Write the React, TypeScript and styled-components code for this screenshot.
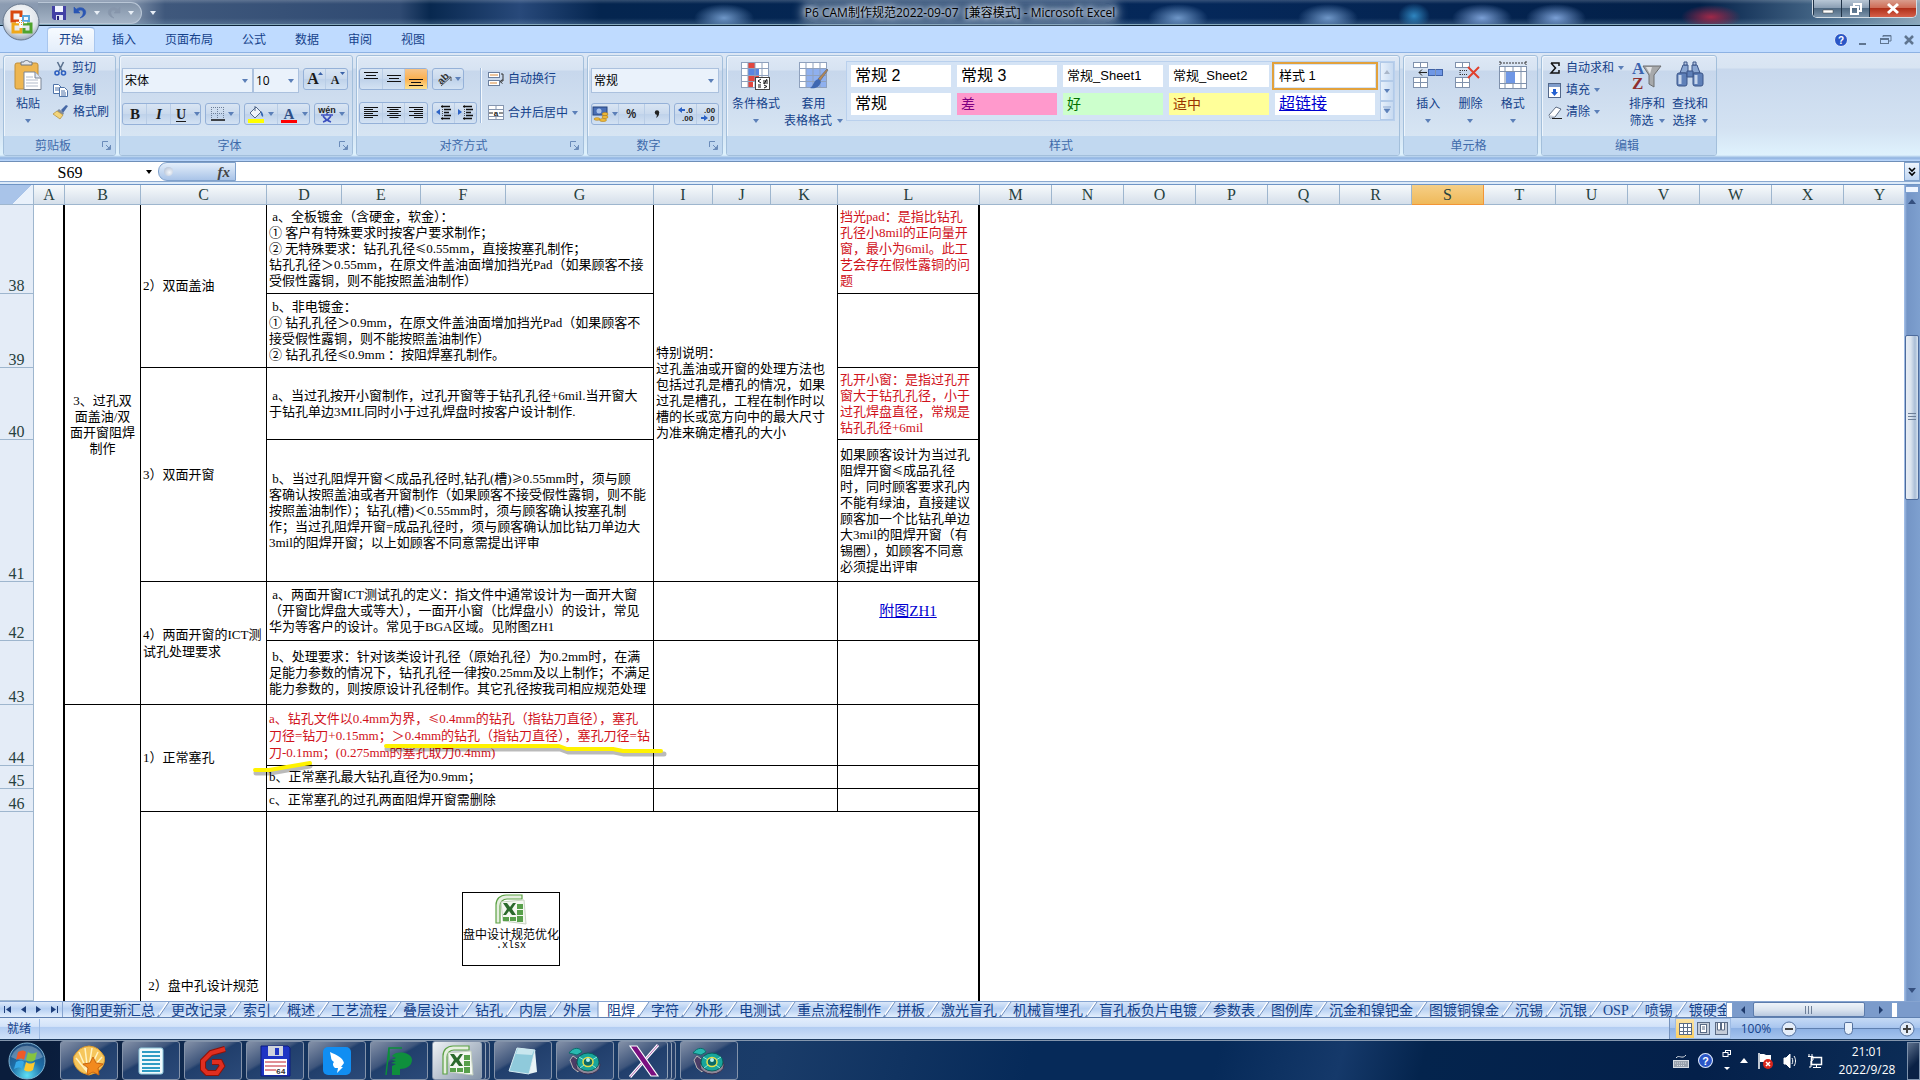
import React from "react";
import styled, { createGlobalStyle, css } from "styled-components";

const UI = `"Open Sans", "Noto Sans CJK SC", sans-serif`;
const SONG = `"Liberation Serif", "Noto Sans CJK SC", serif`;
const CJK = `"Noto Sans CJK SC", sans-serif`;

const Global = createGlobalStyle`
  *, *::before, *::after { box-sizing: border-box; }
  body { margin: 0; background: #fff; overflow: hidden; }
  button, input, select { font: inherit; color: inherit; margin: 0; padding: 0; border: 0; background: none; border-radius: 0; }
  svg { display: block; flex: none; overflow: visible; }
`;

const Window = styled.div`
  height: 100vh;
  display: flex;
  flex-direction: column;
  font: 12px/16px ${UI};
  color: #15428b;
  position: relative;
`;

/* ---------- title bar ---------- */
const TitleBar = styled.header`
  flex: none;
  height: 26px;
  display: grid;
  grid-template-columns: 1fr auto 1fr;
  border-bottom: 1px solid #0c2338;
  box-shadow: inset 0 -1px 0 #86a9bd;
  background:
    radial-gradient(ellipse 30px 14px at 724px 18px, #6f97c8 0, #6f97c800 100%),
    radial-gradient(ellipse 30px 14px at 1178px 18px, #6f97c8 0, #6f97c800 100%),
    radial-gradient(ellipse 30px 14px at 1328px 18px, #6f97c8 0, #6f97c800 100%),
    radial-gradient(ellipse 16px 13px at 1414px 16px, #2f86c0 0, #2f86c000 100%),
    radial-gradient(ellipse 30px 14px at 1482px 18px, #7ba0d6 0, #7ba0d600 100%),
    radial-gradient(ellipse 30px 14px at 1556px 18px, #7ba0d6 0, #7ba0d600 100%),
    radial-gradient(ellipse 30px 12px at 1711px 17px, #a02848 0, #a0284800 100%),
    linear-gradient(180deg, #ffffff30 0, #ffffff00 4px, #ffffff00 18px, #8fb0c850 100%),
    linear-gradient(90deg, #8c9cb2 0, #8293ab 130px, #3f587c 165px, #2f4a72 400px, #08284f 430px, #28497a 520px, #04254f 600px, #05285a 1200px, #032048 1700px, #4a6c8c 1830px, #8aa5b8 100%);
`;
const QuickAccess = styled.div`
  display: flex;
  align-items: center;
  padding-left: 38px;
  gap: 8px;
`;
const QuickPill = styled.div`
  height: 22px;
  width: 104px;
  padding-left: 14px;
  display: flex;
  align-items: center;
  gap: 7px;
  border: 1px solid #b9c6d6;
  border-left: 0;
  border-radius: 0 11px 11px 0;
  background: linear-gradient(#8293a8, #a5b4c6);
`;
const IconButton = styled.button`
  display: flex;
  align-items: center;
  justify-content: center;
`;
const Title = styled.h1`
  margin: 0;
  align-self: center;
  font: 12px/20px ${UI};
  color: #000;
  white-space: pre;
  background: #8fa5be70;
  border-radius: 10px;
  box-shadow: 0 0 8px 6px #8fa5be70;
  height: 20px;
  text-shadow: 0 0 4px #dbe5f0, 0 0 6px #dbe5f0, 0 0 8px #dbe5f0;
`;
const WindowButtons = styled.div`
  justify-self: end;
  display: flex;
  height: 18px;
  margin-right: 3px;
  border: 1px solid #d3dde6;
  border-top: 0;
  border-radius: 0 0 5px 5px;
  overflow: hidden;
`;
const WindowButton = styled(IconButton)<{ $close?: boolean }>`
  width: ${p => (p.$close ? 47 : 28)}px;
  border-left: 1px solid #1f3247;
  background: ${p => (p.$close
    ? "linear-gradient(#d99c8c 0, #cf6d57 45%, #b0301a 50%, #d5604a 100%)"
    : "linear-gradient(#b8c7d6 0, #8b9fb4 45%, #4f6982 50%, #7b93aa 100%)")};
`;
const OfficeButton = styled.button`
  position: absolute;
  left: 2px;
  top: 3px;
  z-index: 2;
`;

/* ---------- ribbon tabs ---------- */
const TabRow = styled.nav`
  flex: none;
  height: 26px;
  display: flex;
  align-items: stretch;
  padding: 1px 4px 0 47px;
  gap: 5px;
  background: #bfdbff;
`;
const RibbonTab = styled.button<{ $active?: boolean }>`
  padding: 0 12px;
  font-size: 12px;
  line-height: 24px;
  border-radius: 4px 4px 0 0;
  border: 1px solid transparent;
  border-width: 1px 0 0;
  ${p => p.$active && css`
    background: linear-gradient(#f7fbff, #e3edfa);
    border-color: #8db2e3;
    box-shadow: inset 1px 0 0 #a8c6ee, inset -1px 0 0 #a8c6ee;
  `}
`;
const DocButtons = styled.div`
  margin-left: auto;
  display: flex;
  align-items: center;
  gap: 8px;
`;

/* ---------- ribbon ---------- */
const Ribbon = styled.div`
  flex: none;
  height: 110px;
  padding: 2px 2px 6px 3px;
  display: flex;
  gap: 3px;
  border-top: 1px solid #8db2e3;
  border-bottom: 1px solid #6f8fb8;
  background: linear-gradient(#dce7f5 0, #d8e4f2 15px, #c8d8ed 16px, #d3e2f2 75px, #dff2fd 102px, #8fb2df 105px, #bfdbff 108px);
`;
const Group = styled.section<{ $w: number }>`
  width: ${p => p.$w}px;
  height: 101px;
  display: flex;
  flex-direction: column;
  border: 1px solid #a3bfdb;
  border-radius: 3px;
  background: linear-gradient(#dee8f5 0, #d7e3f2 14px, #c7d7ec 15px, #d7e5f3 80px);
  box-shadow: inset 1px 1px 0 #eef5fc;
`;
const GroupBody = styled.div<{ $gap?: number; $pad?: string }>`
  flex: 1;
  min-height: 0;
  display: flex;
  gap: ${p => p.$gap ?? 0}px;
  padding: ${p => p.$pad ?? "1px 3px 0"};
`;
const Caption = styled.footer`
  height: 19px;
  display: flex;
  align-items: center;
  padding-right: 4px;
  background: #c1d8f0;
  color: #3e6aaa;
  border-radius: 0 0 2px 2px;
`;
const CaptionText = styled.h2`
  flex: 1;
  margin: 0;
  font-size: 12px;
  font-weight: 400;
  line-height: 19px;
  text-align: center;
`;
const Big = styled.button<{ $w: number }>`
  width: ${p => p.$w}px;
  display: flex;
  flex-direction: column;
  align-items: center;
  line-height: 17px;
  white-space: nowrap;
  padding-top: 3px;
  & > svg:first-child { margin-bottom: 5px; }
`;
const BigLine = styled.span`
  display: flex;
  align-items: center;
  justify-content: center;
  gap: 5px;
  height: 17px;
`;
const Stack = styled.div<{ $gap?: number }>`
  display: flex;
  flex-direction: column;
  gap: ${p => p.$gap ?? 0}px;
`;
const Small = styled.button`
  height: 22px;
  display: flex;
  align-items: center;
  gap: 4px;
  white-space: nowrap;
`;
const Row = styled.div<{ $gap?: number }>`
  display: flex;
  gap: ${p => p.$gap ?? 4}px;
`;
const Cluster = styled.div<{ $w: number }>`
  width: ${p => p.$w}px;
  height: 22px;
  display: flex;
  border: 1px solid #95b1d8;
  border-radius: 3px;
  background: linear-gradient(#d9e5f3, #c9d9ed 50%, #bfd2ea 52%, #d3e2f3);
`;
const Tool = styled.button<{ $on?: boolean }>`
  flex: 1;
  display: flex;
  align-items: center;
  justify-content: center;
  gap: 3px;
  ${p => p.$on && css`background: linear-gradient(#f7c58a, #fbb04f 50%, #fde28f);`}
  & + & { border-left: 1px solid #b9cde6; }
`;
const PercentTool = styled(Tool)`
  font-weight: 600;
  color: #222;
`;
const Combo = styled.label<{ $w: number }>`
  width: ${p => p.$w}px;
  height: 25px;
  display: flex;
  align-items: center;
  padding-right: 4px;
  border: 1px solid #abc1de;
  background: #eaf2fb;
  color: #000;
  select { flex: 1; min-width: 0; appearance: none; padding-left: 2px; outline: 0; height: 22px; line-height: 22px; }
`;
const Rule = styled.i`
  width: 2px;
  height: 55px;
  margin: 0 6px 0 3px;
  border-left: 1px solid #9fb9da;
  border-right: 1px solid #f4f9fe;
`;
const Gallery = styled.div`
  margin-top: 4px;
  height: 60px;
  display: flex;
  gap: 5px;
  padding-left: 4px;
  border: 1px solid #b9d0ed;
  background: #d4e3f5;
`;
const GalleryCells = styled.div`
  padding: 3px 0;
  display: grid;
  grid-template-columns: repeat(5, 100px);
  grid-auto-rows: 22px;
  align-content: start;
  gap: 6px;
`;
const StyleCell = styled.button<{ $bg?: string; $c?: string; $size: number; $on?: boolean; $link?: boolean }>`
  height: 22px;
  padding-left: 4px;
  text-align: left;
  font: ${p => p.$size}px/18px "Liberation Sans", ${CJK};
  white-space: pre;
  background: ${p => p.$bg ?? "#fff"};
  color: ${p => p.$c ?? "#000"};
  text-decoration: ${p => (p.$link ? "underline" : "none")};
  ${p => p.$on && css`outline: 2px solid #e2a13c; outline-offset: 1px;`}
`;
const GalleryScroll = styled.div`
  display: flex;
  flex-direction: column;
  width: 14px;
`;
const ScrollStep = styled(IconButton)`
  flex: 1;
  border: 1px solid #b2cae8;
  background: linear-gradient(90deg, #e8f1fb, #c7daf1);
`;

/* ---------- formula bar ---------- */
const FormulaBar = styled.div`
  flex: none;
  height: 23px;
  display: flex;
  border-bottom: 1px solid #6f95c5;
  background: #fff;
  box-shadow: inset 0 -2px 0 #dceaf9, inset 0 -3px 0 #8aa9d0;
  padding-bottom: 3px;
`;
const NameBox = styled.label`
  width: 158px;
  display: flex;
  align-items: center;
  gap: 5px;
  padding-right: 4px;
  color: #000;
  input { width: 140px; height: 19px; padding-top: 2px; text-align: center; font: 16px/17px ${SONG}; outline: 0; }
`;
const FxPill = styled.div`
  width: 78px;
  display: flex;
  align-items: center;
  justify-content: space-between;
  padding: 0 5px;
  border: 1px solid #7fa1cc;
  border-radius: 9px 0 0 9px;
  background: linear-gradient(#e4eefa, #a9c4e8);
`;
const Knob = styled.i`
  width: 9px;
  height: 9px;
  border-radius: 50%;
  background: radial-gradient(circle at 60% 60%, #f4f7fb, #a9b8cf);
`;
const FxButton = styled.button`
  font: italic bold 15px/16px "Liberation Serif", serif;
  color: #444;
`;
const FormulaInput = styled.input`
  flex: 1;
  outline: 0;
`;
const ExpandButton = styled(IconButton)`
  width: 16px;
  border: 1px solid #7fa1cc;
  background: linear-gradient(#eef5fd, #c0d6f2);
`;

/* ---------- sheet ---------- */
const Work = styled.main`
  flex: 1;
  min-height: 0;
  display: flex;
`;
const SheetArea = styled.div`
  flex: 1;
  min-width: 0;
  overflow: hidden;
  position: relative;
  background: #fff;
`;
/* the last column runs on under the scroll bar */
const Sheet = styled.table`
  width: calc(100% + 12px);
  height: 100%;
  table-layout: fixed;
  border-collapse: separate;
  border-spacing: 0;
  color: #000;
  font: 13px/16px ${SONG};
`;
const ColHead = styled.th<{ $on?: boolean; $corner?: boolean }>`
  height: 20px;
  padding: 1px 0 0;
  font: 16px/18px ${SONG};
  color: #27413e;
  border-right: 1px solid #9eb6ce;
  border-bottom: 1px solid #9eb6ce;
  background: linear-gradient(#f7fafc, #d5dfea);
  ${p => p.$on && css`background: linear-gradient(#f6cf86, #efb95a); border-color: #f29536;`}
  ${p => p.$corner && css`background: linear-gradient(135deg, #a9c4e9 60%, #e9f1fb 61%);`}
`;
const RowHead = styled.th`
  padding: 0;
  vertical-align: bottom;
  font: 16px/14px ${SONG};
  color: #27413e;
  background: #e4ecf7;
  border-right: 1px solid #9eb6ce;
  border-bottom: 1px solid #9eb6ce;
`;
const BodyRow = styled.tr<{ $h?: number }>`
  ${p => p.$h && css`height: ${p.$h}px;`}
`;
const Cell = styled.td<{ $thick?: boolean; $red?: boolean; $loose?: boolean; $center?: boolean; $bare?: boolean }>`
  padding: 0 0 0 2px;
  white-space: pre;
  vertical-align: middle;
  border-right: ${p => (p.$thick ? 2 : 1)}px solid #000;
  border-bottom: 1px solid #000;
  color: ${p => (p.$red ? "#d0121b" : "#000")};
  line-height: ${p => (p.$loose ? 17 : 16)}px;
  ${p => p.$center && css`text-align: center; padding: 0;`}
  ${p => p.$bare && css`border-bottom: 0;`}
`;
const UpperCell = styled(Cell)`
  padding-bottom: 60px;
`;
const LowCell = styled(Cell)`
  vertical-align: bottom;
  padding-bottom: 7px;
`;
const Blank = styled.td<{ $edge?: boolean }>`
  padding: 0;
  ${p => p.$edge && css`border-right: 2px solid #000;`}
`;
const SheetLink = styled.a`
  font-size: 15px;
  line-height: 18px;
  color: #0000d0;
`;
const WideSign = styled.span`
  font-family: ${CJK};
  font-size: 11px;
  line-height: 1;
`;
const Marks = styled.svg`
  position: absolute;
  left: 250px;
  top: 550px;
  pointer-events: none;
`;
const FileObject = styled.figure`
  position: absolute;
  left: 462px;
  top: 707px;
  width: 98px;
  height: 74px;
  margin: 0;
  padding-top: 1px;
  border: 1px solid #000;
  background: #fff;
  color: #000;
  display: flex;
  flex-direction: column;
  align-items: center;
  figcaption { font: 12px/12px ${CJK}; text-align: center; white-space: pre; padding-top: 2px; }
  small { display: block; font: 10px/12px "Liberation Mono", monospace; }
`;
const VScroll = styled.div`
  width: 16px;
  display: flex;
  flex-direction: column;
  align-items: center;
  padding: 1px 0 4px;
  background: linear-gradient(90deg, #a8c3ea 0, #7495c6 3px, #7ea0cf 100%);
`;
const SplitTab = styled.i`
  width: 14px;
  height: 7px;
  border: 1px solid #7d9fce;
  background: linear-gradient(#eef5ff 30%, #6c8fc4 31%, #6c8fc4 45%, #eef5ff 46%);
`;
const Track = styled.div<{ $flex: number }>`
  flex: ${p => p.$flex};
`;
const VThumb = styled.button`
  flex: 163;
  width: 14px;
  display: flex;
  align-items: center;
  justify-content: center;
  border: 1px solid #4d6b9c;
  border-radius: 2px;
  background: linear-gradient(90deg, #e8edf4, #dbe4ef 40%, #a9bdd6 75%, #d7e3f0);
`;

/* ---------- sheet tabs + status ---------- */
const TabStrip = styled.div`
  flex: none;
  height: 17px;
  display: flex;
  border-top: 1px solid #86a4d0;
  border-bottom: 1px solid #5f80b0;
  background: linear-gradient(#dbe8fa, #b5cff2 45%, #e2eefd);
  overflow: hidden;
`;
const NavButtons = styled.div`
  width: 63px;
  display: flex;
  align-items: center;
  justify-content: space-around;
  border-right: 1px solid #86a4d0;
`;
const Tabs = styled.div`
  flex: 1;
  min-width: 0;
  display: flex;
  overflow: hidden;
  padding-left: 8px;
`;
const SheetTab = styled.button<{ $on?: boolean }>`
  flex: none;
  height: 16px;
  padding-top: 1px;
  font: 14px/15px ${SONG};
  white-space: nowrap;
  background: ${p => (p.$on ? "#fff" : "none")};
`;
const HScroll = styled.div`
  width: 194px;
  display: flex;
  align-items: center;
  gap: 6px;
  padding: 0 22px 0 0;
  background: #7b9bcb;
`;
const HThumb = styled.button`
  width: 118px;
  height: 15px;
  display: flex;
  align-items: center;
  justify-content: center;
  border: 1px solid #5c7cac;
  border-radius: 2px;
  background: linear-gradient(#eef3f9, #dbe4ef 50%, #b9c9df);
`;
const Grip = styled.i`
  width: 7px;
  height: 16px;
  border: 1px solid #7d9fce;
  background: #fff;
`;
const StatusBar = styled.footer`
  flex: none;
  height: 22px;
  display: flex;
  align-items: center;
  background: linear-gradient(#e3eefc 0, #d3e3f9 40%, #b3cdf2 45%, #cfe1f8 100%);
  border-bottom: 1px solid #1c3a5e;
`;
const Ready = styled.span`
  width: 40px;
  padding-left: 7px;
  border-right: 1px solid #9dbbe4;
  line-height: 20px;
`;
const ZoomPanel = styled.div`
  margin-left: auto;
  width: 251px;
  height: 21px;
  display: flex;
  align-items: center;
  padding: 0 5px 0 5px;
  border-left: 1px solid #7593be;
  background: linear-gradient(#c5daf5 0, #a9c6ef 45%, #8db1e4 50%, #a5c4ee);
`;
const Views = styled.div`
  display: flex;
  width: 56px;
  height: 21px;
  border: 1px solid #9dbbe4;
`;
const ViewButton = styled(IconButton)<{ $on?: boolean }>`
  flex: 1;
  background: ${p => (p.$on ? "linear-gradient(#fbe3a5, #fcd061)" : "#c9dcf4")};
`;
const Percent = styled.output`
  width: 50px;
  text-align: center;
`;
const ZoomRange = styled.input`
  flex: 1;
  min-width: 0;
  appearance: none;
  height: 16px;
  background: linear-gradient(#5f80b0, #5f80b0) center / 100% 1px no-repeat;
  &::-webkit-slider-thumb {
    appearance: none;
    width: 9px;
    height: 13px;
    border: 1px solid #53719f;
    border-radius: 2px 2px 5px 5px;
    background: #e9f1fb;
  }
`;

/* ---------- taskbar ---------- */
const Taskbar = styled.footer`
  flex: none;
  height: 40px;
  display: flex;
  align-items: stretch;
  color: #fff;
  border-top: 1px solid #8496ad;
  background: linear-gradient(105deg, #0a1d3c 0, #0a1d3c 50px, #14345f 300px, #1a3c69 750px, #062a59 1000px, #062a59 1180px, #15396a 1300px, #04244d 1380px, #04204a 1650px, #0c2d57 100%);
`;
const Start = styled.button`
  width: 60px;
  padding: 1px 0 0 8px;
`;
const TaskList = styled.div`
  display: flex;
  gap: 4px;
`;
const Task = styled.button<{ $on?: boolean; $multi?: boolean }>`
  width: 58px;
  display: flex;
  align-items: center;
  justify-content: center;
  border: 1px solid #8493aa;
  border-radius: 3px;
  background: ${p => (p.$on
    ? "linear-gradient(135deg, #eef1f4, #a7b3c2 60%, #7c8da3)"
    : "linear-gradient(150deg, #8491a8 0, #3f567c 40%, #213f6c 45%, #2b4a79 100%)")};
  ${p => p.$multi && css`
    padding-right: 7px;
    box-shadow: inset -3px 0 0 #24406b, inset -4px 0 0 #93a2b6, inset -7px 0 0 #24406b, inset -8px 0 0 #93a2b6;
  `}
`;
const Tray = styled.div`
  margin-left: auto;
  display: flex;
  align-items: center;
  gap: 9px;
`;
const Clock = styled.time`
  width: 60px;
  margin: 0 1px 0 5px;
  display: flex;
  flex-direction: column;
  text-align: center;
  line-height: 18px;
`;
const ShowDesktop = styled.button`
  width: 13px;
  height: 38px;
  border: 1px solid #7f93ad;
  background: linear-gradient(135deg, #5d708c, #0a2145 60%);
`;

/* ---------- drawings ---------- */
const Caret = ({ c = "#5b7fb8", s = 6 }: { c?: string; s?: number }) => (
  <svg width={s} height={4} viewBox="0 0 6 4"><path d="M0 0h6L3 4z" fill={c} /></svg>
);
const Launcher = ({ label }: { label: string }) => (
  <IconButton aria-label={label}>
    <svg width="9" height="9" viewBox="0 0 9 9" fill="none" stroke="#6b8cba"><path d="M.5 6V.5H6M4 4l3 3M8.500 4v4.500H4" /><path d="M5 8l3-3v3z" fill="#6b8cba" stroke="none" /></svg>
  </IconButton>
);
const OfficeOrb = () => (
  <svg width="38" height="38" viewBox="0 0 38 38">
    <defs>
      <radialGradient id="orb" cx=".5" cy=".35" r=".65"><stop offset="0" stopColor="#fff" /><stop offset=".7" stopColor="#dfe4ea" /><stop offset="1" stopColor="#9aa7b8" /></radialGradient>
    </defs>
    <circle cx="19" cy="19" r="18" fill="url(#orb)" stroke="#68788e" />
    <g fill="none" strokeWidth="3">
      <path d="M17 18h-7V9h9v5" stroke="#d9480f" />
      <path d="M21 18v-5h6v5z" stroke="#5aa5de" strokeWidth="2" />
      <path d="M17 21h-6v8h8v-4" stroke="#f0a818" />
      <path d="M21 21h8v8h-7v-4" stroke="#4fa32d" />
    </g>
    <path d="M19 14v11M14 19.500h11" stroke="#fff" strokeWidth="1.500" />
    <path d="M17 19.500h5M19.500 17v5" stroke="#e58a2c" strokeDasharray="1 1" />
  </svg>
);
const Save = () => (
  <svg width="14" height="14" viewBox="0 0 14 14"><path d="M0 0h14v14H2l-2-2z" fill="#4240a5" /><path d="M3 0h8v6H3z" fill="#f1f4ff" /><path d="M4 9h7v5H4z" fill="#dfe3f5" /><path d="M5 10h2v4H5z" fill="#26247c" /></svg>
);
const Undo = ({ c, flip }: { c: string; flip?: boolean }) => (
  <svg width="14" height="14" viewBox="0 0 14 14"><g transform={flip ? "translate(14 0) scale(-1 1)" : undefined}><path d="M1 1v6h6L5 5c3-2 6-.5 5 3-.4 1.600-1.500 2.800-3 4 4-1 6.500-4 5.500-7C11.500 1.500 6.500.500 3.200 3.200z" fill={c} stroke={c} strokeWidth=".6" /></g></svg>
);
const Paste = () => (
  <svg width="28" height="30" viewBox="0 0 28 30">
    <rect x="1" y="3" width="23" height="26" rx="2" fill="#eeb651" stroke="#c08e38" />
    <path d="M7 5V2h3c0-2 5-2 5 0h3v3z" fill="#e2e5ea" stroke="#6c7480" />
    <path d="M10 12h11l6 6v11.500H10z" fill="#fff" stroke="#7a8596" /><path d="M21 12v6h6" fill="#dfe6f0" stroke="#7a8596" />
    <path d="M12 17h7M12 20h12M12 23h12M12 26h12" stroke="#b3bccb" />
  </svg>
);
const Cut = () => (
  <svg width="15" height="15" viewBox="0 0 15 15" fill="none"><path d="M4.500 1l4.500 9M10.500 1L6 10" stroke="#5c728f" strokeWidth="1.600" /><circle cx="4" cy="12" r="2" stroke="#2d5fc0" strokeWidth="1.600" /><circle cx="10.500" cy="12" r="2" stroke="#2d5fc0" strokeWidth="1.600" /></svg>
);
const Copy = () => (
  <svg width="15" height="15" viewBox="0 0 15 15" stroke="#4f73a8" fill="#fff"><path d="M.5 1.500h5l3 3v6h-8z" /><path d="M6.500 4.500h5l3 3v6h-8z" /><path d="M2 5h4M2 7h4M8 8h4M8 10h5M8 12h5" /></svg>
);
const Brush = () => (
  <svg width="16" height="15" viewBox="0 0 16 15"><path d="M15 1l-2-1-5 5 2 3z" fill="#4668a6" /><path d="M6 4l5 4-1 2-6-4z" fill="#7d8aa0" /><path d="M4 6l6 4-3 4-7-5z" fill="#f2d47a" stroke="#b18b33" strokeWidth=".7" /></svg>
);
const Letter = ({ ch, size, style, line, arrow }: { ch: string; size: number; style?: "i" | "b"; line?: string; arrow?: "up" | "down" }) => (
  <svg width="20" height="18" viewBox="0 0 20 18">
    <text x={arrow ? 8 : 10} y="14" textAnchor="middle" fontFamily="Liberation Serif, serif" fontSize={size} fontWeight="bold" fontStyle={style === "i" ? "italic" : "normal"} fill={line && line !== "u" ? "#2f4f86" : "#1b1b1b"}>{ch}</text>
    {line === "u" && <path d="M5 16.500h10" stroke="#1b1b1b" />}
    {line && line !== "u" && <path d="M2 15h16v3H2z" fill={line} />}
    {arrow === "up" && <path d="M13 5h5l-2.500-3z" fill="#3a62a8" />}
    {arrow === "down" && <path d="M13 2h5l-2.500 3z" fill="#3a62a8" />}
  </svg>
);
const Borders = () => (
  <svg width="14" height="14" viewBox="0 0 14 14" fill="none"><path d="M.5 0v12M6.500 0v12M12.500 0v12M0 .5h13M0 6.500h13" stroke="#6d7f98" strokeDasharray="1 1" /><path d="M0 13h14" stroke="#111" strokeWidth="1.500" /></svg>
);
const Bucket = () => (
  <svg width="18" height="18" viewBox="0 0 18 18"><path d="M3 8l6-6 5 5-6 6z" fill="#eef3fa" stroke="#53688a" /><path d="M8 6V1" stroke="#53688a" /><path d="M14 6c2 2 2.500 4 2 6-2-1-2.500-3-2-6z" fill="#3567b5" /><path d="M1 14h16v4H1z" fill="#ffff00" /></svg>
);
const Phonetic = () => (
  <svg width="18" height="18" viewBox="0 0 18 18"><text x="9" y="8" textAnchor="middle" fontFamily="Liberation Sans, sans-serif" fontSize="9" fontWeight="bold" fill="#222">wén</text><path d="M3 10h12M9 8v2M5 11c2 3 5 5 8 6M13 11c-2 3-5 5-8 6" stroke="#3c50c0" strokeWidth="1.500" fill="none" /></svg>
);
const Lines = ({ y, ws, align = "c" }: { y: number; ws: number[]; align?: "l" | "c" | "r" }) => (
  <svg width="16" height="16" viewBox="0 0 16 16" stroke="#111">
    {ws.map((w, i) => {
      const x = align === "l" ? 1 : align === "r" ? 15 - w : (16 - w) / 2;
      return <path key={i} d={`M${x} ${y + i * (ws.length > 3 ? 2 : 3) + 0.5}h${w}`} />;
    })}
  </svg>
);
const Orient = () => (
  <svg width="16" height="16" viewBox="0 0 16 16"><text x="2" y="12" transform="rotate(-45 6 9)" fontFamily="Liberation Sans, sans-serif" fontSize="10" fontWeight="bold" fill="#333">ab</text><path d="M5 15L15 6M15 6v4M15 6h-3" stroke="#555" fill="none" /></svg>
);
const Indent = ({ out }: { out?: boolean }) => (
  <svg width="17" height="16" viewBox="0 0 17 16"><path d="M6 1.500h9M9 4.500h7M9 7.500h5M9 10.500h7M6 13.500h9" stroke="#111" strokeWidth="1.500" /><path d={out ? "M5 4v6L1 7z" : "M1 4v6l4-3z"} fill="#2c62c5" /><path d="M7.500 0v16" stroke="#555" strokeDasharray="1 1" /></svg>
);
const Wrap = () => (
  <svg width="16" height="16" viewBox="0 0 16 16" fill="none"><rect x=".5" y="1.500" width="11" height="5" fill="#fff" stroke="#6b7f9e" /><rect x=".5" y="9.500" width="11" height="5" fill="#fff" stroke="#6b7f9e" /><path d="M2 4h8" stroke="#d98a3a" /><path d="M2 12h7" stroke="#d98a3a" /><path d="M13 3h2v7h-2M14.500 8.500L12 10.500l2.500 2" stroke="#333" /></svg>
);
const Merge = () => (
  <svg width="16" height="16" viewBox="0 0 16 16" fill="none"><rect x=".5" y=".5" width="15" height="14" fill="#fff" stroke="#8797b0" /><path d="M0 4.500h16M0 11.500h16M8 0v4M8 12v3" stroke="#8797b0" /><path d="M1 8h4M15 8h-4" stroke="#222" /><text x="8" y="11" textAnchor="middle" fontFamily="Liberation Sans, sans-serif" fontSize="8" fontWeight="bold" fill="#222">a</text></svg>
);
const Money = () => (
  <svg width="17" height="16" viewBox="0 0 17 16"><rect x="1" y="1" width="14" height="8" fill="#4a6fb5" stroke="#27457f" /><circle cx="7" cy="5" r="2.500" fill="#a9c2ea" /><g fill="#eebb3c" stroke="#b17d16" strokeWidth=".6"><ellipse cx="13" cy="8" rx="3" ry="1.500" /><ellipse cx="13" cy="11" rx="3" ry="1.500" /><ellipse cx="11" cy="14" rx="3.500" ry="1.500" /><ellipse cx="5" cy="13" rx="3" ry="1.300" /></g></svg>
);
const Decimals = ({ up }: { up?: boolean }) => (
  <svg width="18" height="16" viewBox="0 0 18 16" fontFamily="Liberation Sans, sans-serif" fontSize="8" fontWeight="bold" fill="#222">
    <text x={up ? 9 : 5} y="7">{up ? ".0" : ".00"}</text><text x={up ? 5 : 9} y="15">{up ? ".00" : ".0"}</text>
    <path d={up ? "M1 4l4-3v2h3v2H5v2z" : "M9 12L5 9v2H2v2h3v2z"} fill="#2c62c5" />
  </svg>
);
const GridIcon = ({ kind }: { kind: "cond" | "table" }) => (
  <svg width="30" height="30" viewBox="0 -2 30 30">
    <rect x=".5" y=".5" width="27" height="25" fill="#fff" stroke="#8fa1bd" />
    {kind === "cond" ? <g><path d="M7 1h7v5H7zM7 14h11v5H7z" fill="#e2473f" /><path d="M7 7h11v6H7z" fill="#5a86e0" /><path d="M7 19h5v6H7z" fill="#e2473f" /></g> : <path d="M7 6h20v19H7z" fill="#8fb0ef" />}
    <path d="M7 0v26M14 0v26M21 0v26M0 6.500h28M0 13.500h28M0 19.500h28" stroke="#8fa1bd" />
    {kind === "cond"
      ? <g><rect x="14.500" y="15.500" width="14" height="12" fill="#fff" stroke="#444" /><path d="M20 17l-3 2 3 2M17 23h3M17 25h3M22 19h5M22 21h5M26 17l-3 5M23 23l3 1.500-3 1.500" stroke="#111" fill="none" /></g>
      : <g><path d="M29 8l-8 11-2-2L28 7z" fill="#b8874f" stroke="#6b6f7a" strokeWidth=".8" /><path d="M20 17l2 3c-2 6-7 7-11 6 4-2 3-8 9-9z" fill="#3f67b1" /></g>}
  </svg>
);
const CellsIcon = ({ kind }: { kind: "ins" | "del" | "fmt" }) => (
  <svg width="30" height="30" viewBox="0 -1 30 30" fill="#fff" stroke="#7f91ac">
    {kind === "fmt" ? <g><path d="M2 2h26M2 0v4M28 0v4" stroke="#333" strokeDasharray="2 1" /><rect x="1.500" y="5.500" width="27" height="22" /><path d="M7 5v22M23 5v22M1 10.500h27M1 22.500h27M15 5v5M15 23v5" /><rect x="8" y="11" width="9" height="11" fill="#6f97e5" stroke="none" /></g>
      : <g><rect x=".5" y="1.500" width="14" height="5" /><path d="M7.500 1v6" /><rect x=".5" y="16.500" width="14" height="10" /><path d="M7.500 16v11M0 21.500h15" />
        {kind === "ins" ? <g><rect x="15.500" y="8.500" width="14" height="6" fill="#6f97e5" stroke="#3f62a8" /><path d="M22.500 8v7" /><path d="M6 11.500h8M9 8.500l-3 3 3 3" stroke="#222" fill="none" /></g>
          : <g><path d="M5 9.500h8M5 13.500h8M5 9v5" stroke="#333" strokeDasharray="1 1" /><path d="M13 6l11 11M24 6L13 17" stroke="#e0402c" strokeWidth="2" /></g>}</g>}
  </svg>
);
const Sigma = () => <svg width="14" height="14" viewBox="0 0 14 14"><path d="M3 2h8v3M3 2l4.500 5L3 12h8V9" stroke="#111" strokeWidth="1.500" fill="none" /></svg>;
const Fill = () => <svg width="14" height="15" viewBox="0 0 14 15"><rect x=".5" y=".5" width="12" height="14" fill="#fff" stroke="#53688a" /><path d="M1 1h11v3H1z" fill="#7f9dcc" /><path d="M5 6h3v3h2l-3.500 4L3 9h2z" fill="#2460d0" /></svg>;
const Eraser = () => <svg width="14" height="13" viewBox="0 0 14 13"><path d="M1 9l7-8 5 2-6 8-5 1z" fill="#fff" stroke="#5e6e85" /><path d="M1 9l5 1 1 1-5 1z" fill="#c8d0dc" /><path d="M4 12.500h10" stroke="#222" /></svg>;
const SortIcon = () => (
  <svg width="30" height="30" viewBox="0 0 30 30" fontFamily="Liberation Serif, serif" fontWeight="bold" fontSize="17"><path d="M11 6h18l-7 9v12l-5-3v-9z" fill="#a7a9ab" stroke="#6c6e70" /><path d="M14 7h6l-2 7z" fill="#e0e1e2" /><text x="0" y="14" fill="#3b63ae">A</text><text x="0" y="29" fill="#8e2f2f">Z</text></svg>
);
const Binoculars = () => (
  <svg width="28" height="30" viewBox="0 0 28 30" fill="#5f80b8" stroke="#3a5488"><path d="M7 5h5v8H4zM16 5h5l3 8h-8z" fill="#8ba7d2" /><path d="M8 2h3v3H8zM17 2h3v3h-3z" fill="#b7c8e2" /><rect x="1" y="13" width="10" height="13" rx="2" /><rect x="17" y="13" width="10" height="13" rx="2" /><path d="M11 11h6v6h-6z" /><path d="M4 15v9M20 15v9" stroke="#c7d6ec" strokeWidth="3" /></svg>
);
const ExcelIcon = () => (
  <svg width="32" height="32" viewBox="0 0 32 32">
    <path d="M1 29V11C1 5 5 1 11 1h16v4H12c-4 0-7 3-7 7v17z" fill="#e5efdf" stroke="#5da245" strokeWidth="1.200" /><path d="M6 8l23-2 2 24-23-3z" fill="#f4f8f1" stroke="#c6d3c0" />
    <g fill="#57a04a"><path d="M22 10h6v5h-6zM22 16h6v5h-6zM22 22h6v6h-6zM8 23h6v4H8zM15 23h6v4h-6z" /></g>
    <path d="M8 9h4l3 4 3-4h3l-4 6 4 6h-4l-3-4-3 4H8l4-6z" fill="#2b6a2c" />
  </svg>
);
const StartOrb = () => (
  <svg width="38" height="38" viewBox="0 0 38 38">
    <defs><radialGradient id="win" cx=".5" cy=".9" r=".9"><stop offset="0" stopColor="#5ee0f5" /><stop offset=".5" stopColor="#1d6ea8" /><stop offset="1" stopColor="#234a78" /></radialGradient></defs>
    <circle cx="19" cy="19" r="18" fill="url(#win)" stroke="#7fb4d4" /><path d="M3 15a17 17 0 0 1 32 0c-9 5-22 5-32 0z" fill="#ffffff45" />
    <path d="M10 10c3-2 6-2 8 0l-2 8c-2-2-5-2-8 0z" fill="#ee5a28" /><path d="M20 10c3 2 5 2 9 0l-2 8c-3 2-6 2-9 0z" fill="#86c440" />
    <path d="M8 20c3-2 6-2 8 0l-2 7c-2-2-5-2-8 0z" fill="#36a9e8" /><path d="M18 20c3 2 5 2 9 0l-2 8c-3 2-6 2-9 0z" fill="#fdc82e" />
  </svg>
);
const Shell = () => (
  <svg width="32" height="32" viewBox="0 0 32 32"><path d="M10 28C3 25-1 17 1 11l3-4 3-3 4-2 5-1 5 1 4 2 3 3 3 4c2 6-2 14-9 17l-6 2z" fill="#f6c65c" stroke="#dc9a2e" /><path d="M15 28L3 13M15 28L6 7M15 28L12 3M15 28l4-25M15 28L25 7M15 28l14-16" stroke="#fff2c2" strokeWidth="1.500" /><path d="M20 12l3 6 7 1-5 4 1 7-6-3-6 3 1-7-5-4 7-1z" fill="#f28a1e" stroke="#c8640e" /></svg>
);
const Doc = () => <svg width="26" height="28" viewBox="0 0 26 28"><rect x="1" y="1" width="24" height="26" rx="2" fill="#f0fafd" stroke="#8fc9dc" /><path d="M4 5h18M4 9h18M4 13h18M4 17h18M4 21h18M4 24h18" stroke="#2f9cc4" strokeWidth="2" /></svg>;
const GLogo = () => <svg width="28" height="30" viewBox="0 0 28 30" fill="none"><path d="M26 3L12 7 4 15v8l4 4h10l5-7-2-4h-8" stroke="#8f1208" strokeWidth="6" /><path d="M26 3L12 7 4 15v8l4 4h10l5-7-2-4h-8" stroke="#e02e20" strokeWidth="4" /></svg>;
const Floppy = () => (
  <svg width="31" height="32" viewBox="0 0 31 32"><path d="M1 1h27l2 2v28H1z" fill="#1f35c4" stroke="#0d1c80" /><path d="M8 1h15v10H8z" fill="#cfd3dd" /><path d="M15 3h4v7h-4z" fill="#1f35c4" /><path d="M4 14h23v16H4z" fill="#fff" /><path d="M5 17h21M5 21h21M5 25h11" stroke="#c01f2a" /><text x="16" y="29" fontFamily="Liberation Mono, monospace" fontSize="8" fontWeight="bold" fill="#333">64</text></svg>
);
const Wing = () => <svg width="28" height="28" viewBox="0 0 28 28"><rect width="28" height="28" rx="5" fill="#118ef2" /><path d="M7 5c7 3 13 6 14 11l-3 4h2l-6 6 1-5h-3c-3-3-2-5-1-6-2-1-3-3-3-5z" fill="#fff" /></svg>;
const PLogo = () => <svg width="30" height="30" viewBox="0 0 30 30"><path d="M2 29L5 2h13M5 2v12" fill="none" stroke="#0b8f3a" strokeWidth="1.500" /><path d="M8 10c4-6 20-4 20 4 0 6-6 9-12 9v6H8v-9l4-2-5-1 5-2-5-1 5-2z" fill="#0f8f3d" /></svg>;
const Notepad = () => <svg width="30" height="32" viewBox="0 0 30 32"><path d="M9 3l18 2-6 24L1 26z" fill="#8fcadb" stroke="#d6edf3" /><path d="M27 5l2 22-8 2z" fill="#e7f3f6" /><path d="M10 3l16 2-2 5L8 9z" fill="#c8e6ee" /></svg>;
const Cam = () => (
  <svg width="32" height="28" viewBox="0 0 32 28"><path d="M0 6C4 0 11 0 13 5L8 8z" fill="#28b8b0" stroke="#0d6d6b" /><path d="M1 13l3-4 7 5-2 11-5-4z" fill="#4b3d66" stroke="#d8d2c4" strokeWidth=".8" /><ellipse cx="19" cy="18" rx="12" ry="9" fill="#8d8798" stroke="#3c3050" /><ellipse cx="19" cy="15" rx="11" ry="9" fill="#18a59c" stroke="#0a5f5c" /><path d="M10 10l5 3M28 10l-5 3M11 21l4-3M27 21l-4-3" stroke="#8fe8e0" /><ellipse cx="19" cy="15" rx="5" ry="4.500" fill="#0b6a68" stroke="#e6e04a" strokeWidth="1.500" /><circle cx="19" cy="13" r="2" fill="#b7f2ec" /></svg>
);
const XLogo = () => <svg width="32" height="34" viewBox="0 0 32 34"><path d="M30 1L2 33" stroke="#fff" strokeWidth="3" /><path d="M30 1L2 33" stroke="#a03aa0" strokeWidth=".8" /><path d="M2 2h7l21 30h-7z" fill="#7a1080" stroke="#fff" strokeWidth="1.200" /></svg>;
const Help = ({ s }: { s: number }) => <svg width={s} height={s} viewBox="0 0 14 14"><circle cx="7" cy="7" r="6.500" fill="#2a56c6" stroke="#dfe9fb" /><text x="7" y="11" textAnchor="middle" fontFamily="Liberation Sans, sans-serif" fontWeight="bold" fontSize="10" fill="#fff">?</text></svg>;
const Nav = ({ d }: { d: string }) => <svg width="9" height="9" viewBox="0 0 9 9"><path d={d} fill="#1e3f7c" /></svg>;
const Seam = ({ kind }: { kind: "plain" | "before" | "after" }) => (
  <svg width="16" height="16" viewBox="0 0 16 16">
    {kind === "before" && <g><path d="M7 0h9v16H7z" fill="#fff" /><path d="M7 0v16" stroke="#6f8fc0" /></g>}
    {kind === "after" && <path d="M0 0h14L3 16H0z" fill="#fff" />}
    {kind !== "before" && <g><path d="M2 16L13 0" stroke="#fff" strokeWidth="2" /><path d="M3 16L14 0" stroke="#6f8fc0" /><path d="M1 16h3v-4z" fill="#6f8fc0" /></g>}
  </svg>
);

/* ---------- data ---------- */
const T = ({ s }: { s: string }) => (
  <>{s.split(/([≤≥])/).map((p, i) => (i % 2 ? <WideSign key={i}>{p}</WideSign> : p))}</>
);
const columns: [string, number?][] = [
  ["A", 31], ["B", 76], ["C", 126], ["D", 75], ["E", 79], ["F", 85], ["G", 148], ["I", 59], ["J", 58], ["K", 67], ["L", 142],
  ["M", 72], ["N", 72], ["O", 72], ["P", 72], ["Q", 72], ["R", 72], ["S", 72], ["T", 72], ["U", 72], ["V", 72], ["W", 72], ["X", 72], ["Y"],
];
const sheets = ["衡阳更新汇总", "更改记录", "索引", "概述", "工艺流程", "叠层设计", "钻孔", "内层", "外层", "阻焊", "字符", "外形", "电测试", "重点流程制作", "拼板", "激光盲孔", "机械盲埋孔", "盲孔板负片电镀", "参数表", "图例库", "沉金和镍钯金", "图镀铜镍金", "沉锡", "沉银", "OSP", "喷锡", "镀硬金"];
const activeSheet = sheets.indexOf("阻焊");
const d38 = ` a、全板镀金（含硬金，软金）：
① 客户有特殊要求时按客户要求制作；
② 无特殊要求：钻孔孔径≤0.55mm，直接按塞孔制作；
钻孔孔径＞0.55mm，在原文件盖油面增加挡光Pad（如果顾客不接
受假性露铜，则不能按照盖油制作）`;
const d39 = ` b、非电镀金：
① 钻孔孔径＞0.9mm，在原文件盖油面增加挡光Pad（如果顾客不
接受假性露铜，则不能按照盖油制作）
② 钻孔孔径≤0.9mm ：按阻焊塞孔制作。`;
const d40 = ` a、当过孔按开小窗制作，过孔开窗等于钻孔孔径+6mil.当开窗大
于钻孔单边3MIL同时小于过孔焊盘时按客户设计制作.`;
const d41 = ` b、当过孔阻焊开窗＜成品孔径时,钻孔(槽)≥0.55mm时，须与顾
客确认按照盖油或者开窗制作（如果顾客不接受假性露铜，则不能
按照盖油制作）；钻孔(槽)＜0.55mm时，须与顾客确认按塞孔制
作；当过孔阻焊开窗=成品孔径时，须与顾客确认加比钻刀单边大
3mil的阻焊开窗；以上如顾客不同意需提出评审`;
const d42 = ` a、两面开窗ICT测试孔的定义：指文件中通常设计为一面开大窗
（开窗比焊盘大或等大），一面开小窗（比焊盘小）的设计，常见
华为等客户的设计。常见于BGA区域。见附图ZH1`;
const d43 = ` b、处理要求：针对该类设计孔径（原始孔径）为0.2mm时，在满
足能力参数的情况下，钻孔孔径一律按0.25mm及以上制作；不满足
能力参数的，则按原设计孔径制作。其它孔径按我司相应规范处理`;
const d44 = `a、钻孔文件以0.4mm为界，≤0.4mm的钻孔（指钻刀直径），塞孔
刀径=钻刀+0.15mm；＞0.4mm的钻孔（指钻刀直径），塞孔刀径=钻
刀-0.1mm；(0.275mm的塞孔取刀0.4mm)`;
const note = `特别说明：
过孔盖油或开窗的处理方法也
包括过孔是槽孔的情况，如果
过孔是槽孔，工程在制作时以
槽的长或宽方向中的最大尺寸
为准来确定槽孔的大小`;
const l38 = `挡光pad：是指比钻孔
孔径小8mil的正向量开
窗，最小为6mil。此工
艺会存在假性露铜的问
题`;
const l40 = `孔开小窗：是指过孔开
窗大于钻孔孔径，小于
过孔焊盘直径，常规是
钻孔孔径+6mil`;
const l41 = `如果顾客设计为当过孔
阻焊开窗≤成品孔径
时，同时顾客要求孔内
不能有绿油，直接建议
顾客加一个比钻孔单边
大3mil的阻焊开窗（有
锡圈），如顾客不同意
必须提出评审`;

const RibbonGroup = ({ w, title, launcher, children, gap, pad }: { w: number; title: string; launcher?: boolean; children: React.ReactNode; gap?: number; pad?: string }) => (
  <Group $w={w} aria-label={title}>
    <GroupBody $gap={gap} $pad={pad}>{children}</GroupBody>
    <Caption><CaptionText>{title}</CaptionText>{launcher && <Launcher label={`${title}设置`} />}</Caption>
  </Group>
);

export default function App() {
  return (
    <Window>
      <Global />
      <OfficeButton aria-label="Office"><OfficeOrb /></OfficeButton>
      <TitleBar>
        <QuickAccess>
          <QuickPill>
            <IconButton aria-label="保存"><Save /></IconButton>
            <IconButton aria-label="撤销"><Undo c="#2a56b4" /></IconButton>
            <Caret c="#e8eef6" />
            <IconButton aria-label="恢复"><Undo c="#8796ab" flip /></IconButton>
            <Caret c="#e8eef6" />
          </QuickPill>
          <IconButton aria-label="自定义"><Caret c="#e8eef6" /></IconButton>
        </QuickAccess>
        <Title>P6 CAM制作规范2022-09-07  [兼容模式] - Microsoft Excel</Title>
        <WindowButtons>
          <WindowButton aria-label="最小化"><svg width="12" height="12"><path d="M1 7h10v3H1z" fill="#fff" stroke="#444" strokeWidth=".5" /></svg></WindowButton>
          <WindowButton aria-label="还原"><svg width="12" height="12" fill="none" stroke="#fff" strokeWidth="2"><path d="M4 3V1h7v7H9" /><rect x="1" y="4" width="7" height="7" /></svg></WindowButton>
          <WindowButton $close aria-label="关闭"><svg width="12" height="11"><path d="M1 1l10 9M11 1L1 10" stroke="#fff" strokeWidth="3" /></svg></WindowButton>
        </WindowButtons>
      </TitleBar>

      <TabRow>
        {["开始", "插入", "页面布局", "公式", "数据", "审阅", "视图"].map((t, i) => <RibbonTab key={t} $active={i === 0}>{t}</RibbonTab>)}
        <DocButtons>
          <IconButton aria-label="帮助"><Help s={14} /></IconButton>
          <IconButton aria-label="最小化工作簿"><svg width="14" height="12"><path d="M3 9h7v2H3z" fill="#5f7590" /></svg></IconButton>
          <IconButton aria-label="还原工作簿"><svg width="16" height="12" fill="none" stroke="#5f7590"><path d="M5 3V1.500h8V7h-2M5 2h8" /><rect x="2.500" y="4.500" width="8" height="5" /><path d="M2 5h9" strokeWidth="2" /></svg></IconButton>
          <IconButton aria-label="关闭工作簿"><svg width="14" height="12"><path d="M3 2l8 8M11 2l-8 8" stroke="#5f7590" strokeWidth="2.500" /></svg></IconButton>
        </DocButtons>
      </TabRow>

      <Ribbon>
        <RibbonGroup w={113} title="剪贴板" launcher gap={4}>
          <Big $w={42}><Paste /><BigLine>粘贴</BigLine><BigLine><Caret /></BigLine></Big>
          <Stack>
            <Small><Cut />剪切</Small>
            <Small><Copy />复制</Small>
            <Small><Brush />格式刷</Small>
          </Stack>
        </RibbonGroup>

        <RibbonGroup w={234} title="字体" launcher pad="12px 2px 0">
          <Stack $gap={10}>
            <Row>
              <Row $gap={0}>
                <Combo $w={131}><select aria-label="字体"><option>宋体</option></select><Caret /></Combo>
                <Combo $w={46}><select aria-label="字号"><option>10</option></select><Caret /></Combo>
              </Row>
              <Cluster $w={45}><Tool aria-label="增大字号"><Letter ch="A" size={16} arrow="up" /></Tool><Tool aria-label="减小字号"><Letter ch="A" size={12} arrow="down" /></Tool></Cluster>
            </Row>
            <Row>
              <Cluster $w={79}>
                <Tool aria-label="加粗"><Letter ch="B" size={15} /></Tool><Tool aria-label="倾斜"><Letter ch="I" size={15} style="i" /></Tool><Tool aria-label="下划线"><Letter ch="U" size={14} line="u" /><Caret /></Tool>
              </Cluster>
              <Cluster $w={35}><Tool aria-label="边框"><Borders /><Caret /></Tool></Cluster>
              <Cluster $w={66}><Tool aria-label="填充颜色"><Bucket /><Caret /></Tool><Tool aria-label="字体颜色"><Letter ch="A" size={15} line="#f00" /><Caret /></Tool></Cluster>
              <Cluster $w={35}><Tool aria-label="拼音"><Phonetic /><Caret /></Tool></Cluster>
            </Row>
          </Stack>
        </RibbonGroup>

        <RibbonGroup w={228} title="对齐方式" launcher pad="12px 3px 0 2px">
          <Stack $gap={12}>
            <Row>
              <Cluster $w={69}><Tool aria-label="顶端对齐"><Lines y={1} ws={[14, 10, 14]} /></Tool><Tool aria-label="垂直居中"><Lines y={4} ws={[14, 10, 14]} /></Tool><Tool $on aria-label="底端对齐"><Lines y={8} ws={[14, 10, 14]} /></Tool></Cluster>
              <Cluster $w={32}><Tool aria-label="方向"><Orient /><Caret /></Tool></Cluster>
            </Row>
            <Row>
              <Cluster $w={69}><Tool aria-label="左对齐"><Lines y={2} ws={[14, 9, 14, 9, 14, 9]} align="l" /></Tool><Tool aria-label="居中"><Lines y={2} ws={[14, 9, 14, 9, 14, 9]} /></Tool><Tool aria-label="右对齐"><Lines y={2} ws={[14, 9, 14, 9, 14, 9]} align="r" /></Tool></Cluster>
              <Cluster $w={45}><Tool aria-label="减少缩进"><Indent out /></Tool><Tool aria-label="增加缩进"><Indent /></Tool></Cluster>
            </Row>
          </Stack>
          <Rule />
          <Stack $gap={12}>
            <Small><Wrap />自动换行</Small>
            <Small><Merge />合并后居中<Caret /></Small>
          </Stack>
        </RibbonGroup>

        <RibbonGroup w={136} title="数字" launcher pad="12px 3px 0">
          <Stack $gap={10}>
            <Combo $w={128}><select aria-label="数字格式"><option>常规</option></select><Caret /></Combo>
            <Row>
              <Cluster $w={79}><Tool aria-label="会计数字格式"><Money /><Caret /></Tool><PercentTool>%</PercentTool><Tool aria-label="千位分隔"><svg width="6" height="8"><circle cx="3" cy="2.500" r="2.200" fill="#222" /><path d="M5 2c.5 3-1 5-3 6 1-2 1-3 .5-4z" fill="#222" /></svg></Tool></Cluster>
              <Cluster $w={45}><Tool aria-label="增加小数位数"><Decimals up /></Tool><Tool aria-label="减少小数位数"><Decimals /></Tool></Cluster>
            </Row>
          </Stack>
        </RibbonGroup>

        <RibbonGroup w={674} title="样式" pad="1px 4px 0">
          <Big $w={50}><GridIcon kind="cond" /><BigLine>条件格式</BigLine><BigLine><Caret /></BigLine></Big>
          <Big $w={65}><GridIcon kind="table" /><BigLine>套用</BigLine><BigLine>表格格式<Caret /></BigLine></Big>
          <Gallery>
            <GalleryCells>
              <StyleCell $size={16}>常规 2</StyleCell>
              <StyleCell $size={16}>常规 3</StyleCell>
              <StyleCell $size={13}>常规_Sheet1</StyleCell>
              <StyleCell $size={13}>常规_Sheet2</StyleCell>
              <StyleCell $size={13} $on>样式 1</StyleCell>
              <StyleCell $size={16}>常规</StyleCell>
              <StyleCell $size={14} $bg="#ff99cc" $c="#800080">差</StyleCell>
              <StyleCell $size={14} $bg="#ccffcc" $c="#007000">好</StyleCell>
              <StyleCell $size={14} $bg="#ffff99" $c="#993300">适中</StyleCell>
              <StyleCell $size={16} $c="#0000d0" $link>超链接</StyleCell>
            </GalleryCells>
            <GalleryScroll>
              <ScrollStep aria-label="上一行"><svg width="6" height="4"><path d="M0 4h6L3 0z" fill="#a9b6c8" /></svg></ScrollStep>
              <ScrollStep aria-label="下一行"><Caret /></ScrollStep>
              <ScrollStep aria-label="其他"><svg width="8" height="8"><path d="M0 1h8M1 3h6L4 7z" fill="#5b7fb8" stroke="#5b7fb8" strokeWidth=".6" /></svg></ScrollStep>
            </GalleryScroll>
          </Gallery>
        </RibbonGroup>

        <RibbonGroup w={135} title="单元格">
          <Big $w={43}><CellsIcon kind="ins" /><BigLine>插入</BigLine><BigLine><Caret /></BigLine></Big>
          <Big $w={43}><CellsIcon kind="del" /><BigLine>删除</BigLine><BigLine><Caret /></BigLine></Big>
          <Big $w={43}><CellsIcon kind="fmt" /><BigLine>格式</BigLine><BigLine><Caret /></BigLine></Big>
        </RibbonGroup>

        <RibbonGroup w={176} title="编辑" gap={2} pad="1px 0 0 6px">
          <Stack>
            <Small><Sigma />自动求和<Caret /></Small>
            <Small><Fill />填充<Caret /></Small>
            <Small><Eraser />清除<Caret /></Small>
          </Stack>
          <Big $w={42}><SortIcon /><BigLine>排序和</BigLine><BigLine>筛选<Caret /></BigLine></Big>
          <Big $w={40}><Binoculars /><BigLine>查找和</BigLine><BigLine>选择<Caret /></BigLine></Big>
        </RibbonGroup>
      </Ribbon>

      <FormulaBar>
        <NameBox><input aria-label="名称框" defaultValue="S69" /><Caret c="#000" s={8} /></NameBox>
        <FxPill><Knob /><FxButton>fx</FxButton></FxPill>
        <FormulaInput aria-label="编辑栏" />
        <ExpandButton aria-label="展开编辑栏"><svg width="8" height="10" fill="none" stroke="#000" strokeWidth="1.600"><path d="M1 1l3 3 3-3M1 5l3 3 3-3" /></svg></ExpandButton>
      </FormulaBar>

      <Work>
        <SheetArea>
          <Sheet>
            <colgroup><col width={34} />{columns.map(([n, w]) => <col key={n} width={w} />)}</colgroup>
            <thead><tr><ColHead $corner aria-label="全选" />{columns.map(([n]) => <ColHead key={n} $on={n === "S"}>{n}</ColHead>)}</tr></thead>
            <tbody>
              <BodyRow $h={89}>
                <RowHead>38</RowHead>
                <Blank $edge rowSpan={10} />
                <UpperCell $center rowSpan={6}>{"3、过孔双\n面盖油/双\n面开窗阻焊\n制作"}</UpperCell>
                <Cell rowSpan={2}>2）双面盖油</Cell>
                <Cell colSpan={4}><T s={d38} /></Cell>
                <Cell colSpan={3} rowSpan={4}>{note}</Cell>
                <Cell $thick $red>{l38}</Cell>
                <Blank colSpan={13} rowSpan={10} />
              </BodyRow>
              <BodyRow $h={74}><RowHead>39</RowHead><Cell colSpan={4}><T s={d39} /></Cell><Cell $thick /></BodyRow>
              <BodyRow $h={72}><RowHead>40</RowHead><Cell rowSpan={2}>3）双面开窗</Cell><Cell colSpan={4}><T s={d40} /></Cell><Cell $thick $red>{l40}</Cell></BodyRow>
              <BodyRow $h={142}><RowHead>41</RowHead><Cell colSpan={4}><T s={d41} /></Cell><Cell $thick><T s={l41} /></Cell></BodyRow>
              <BodyRow $h={59}><RowHead>42</RowHead><Cell rowSpan={2} $loose>{"4）两面开窗的ICT测\n试孔处理要求"}</Cell><Cell colSpan={4}>{d42}</Cell><Cell colSpan={3} /><Cell $thick $center><SheetLink href="#ZH1">附图ZH1</SheetLink></Cell></BodyRow>
              <BodyRow $h={64}><RowHead>43</RowHead><Cell colSpan={4}>{d43}</Cell><Cell colSpan={3} /><Cell $thick /></BodyRow>
              <BodyRow $h={61}><RowHead>44</RowHead><Cell $bare rowSpan={4} /><Cell rowSpan={3}>1）正常塞孔</Cell><Cell colSpan={4} $red $loose><T s={d44} /></Cell><Cell colSpan={3} /><Cell $thick /></BodyRow>
              <BodyRow $h={23}><RowHead>45</RowHead><Cell colSpan={4}>b、正常塞孔最大钻孔直径为0.9mm；</Cell><Cell colSpan={3} /><Cell $thick /></BodyRow>
              <BodyRow $h={23}><RowHead>46</RowHead><Cell colSpan={4}>c、正常塞孔的过孔两面阻焊开窗需删除</Cell><Cell colSpan={3} /><Cell $thick /></BodyRow>
              <BodyRow><RowHead /><LowCell $bare $center>2）盘中孔设计规范</LowCell><Cell $bare $thick colSpan={8} /></BodyRow>
            </tbody>
          </Sheet>
          <FileObject><ExcelIcon /><figcaption>盘中设计规范优化<small>.xlsx</small></figcaption></FileObject>
          <Marks width="420" height="44" viewBox="0 0 420 44" fill="none" strokeLinecap="round" strokeLinejoin="round">
            <path d="M137 14H310L318 17H364L374 19H414M6 38H20L60 31" stroke="#00000045" strokeWidth="5" />
            <path d="M136 11H309L317 14H363L373 16H411M5 35H19L60 28" stroke="#fff200" strokeWidth="4" />
          </Marks>
        </SheetArea>
        <VScroll>
          <SplitTab />
          <IconButton aria-label="向上滚动"><svg width="14" height="16"><path d="M3 11h8L7 6z" fill="#35507f" /></svg></IconButton>
          <Track $flex={126} />
          <VThumb aria-label="垂直滚动条"><svg width="8" height="8"><path d="M0 .5h8M0 3.500h8M0 6.500h8" stroke="#6d7f98" /></svg></VThumb>
          <Track $flex={484} />
          <IconButton aria-label="向下滚动"><svg width="14" height="14"><path d="M3 5h8l-4 5z" fill="#35507f" /></svg></IconButton>
        </VScroll>
      </Work>

      <TabStrip>
        <NavButtons>
          <IconButton aria-label="第一张"><Nav d="M1 1h1v7H1zM8 1v7L3 4.500z" /></IconButton>
          <IconButton aria-label="上一张"><Nav d="M7 1v7L2 4.500z" /></IconButton>
          <IconButton aria-label="下一张"><Nav d="M2 1v7l5-3.500z" /></IconButton>
          <IconButton aria-label="最后一张"><Nav d="M7 1h1v7H7zM1 1v7l5-3.500z" /></IconButton>
        </NavButtons>
        <Tabs>
          {sheets.map((s, i) => (
            <React.Fragment key={s}>
              <SheetTab $on={i === activeSheet}>{s}</SheetTab>
              {i < sheets.length - 1 && <Seam kind={i === activeSheet ? "after" : i === activeSheet - 1 ? "before" : "plain"} />}
            </React.Fragment>
          ))}
        </Tabs>
        <HScroll>
          <Grip />
          <IconButton aria-label="向左滚动"><svg width="8" height="10"><path d="M6 1v8L2 5z" fill="#1f3a6b" /></svg></IconButton>
          <HThumb aria-label="水平滚动条"><svg width="8" height="8"><path d="M.5 0v8M3.500 0v8M6.500 0v8" stroke="#6d7f98" /></svg></HThumb>
          <Track $flex={1} />
          <IconButton aria-label="向右滚动"><svg width="8" height="10"><path d="M2 1v8l4-4z" fill="#1f3a6b" /></svg></IconButton>
          <Grip />
        </HScroll>
      </TabStrip>

      <StatusBar>
        <Ready>就绪</Ready>
        <ZoomPanel>
          <Views>
            <ViewButton $on aria-label="普通"><svg width="13" height="12" fill="#fff" stroke="#5a6b85"><rect x=".5" y=".5" width="12" height="11" /><path d="M4.500 0v12M8.500 0v12M0 4.500h13M0 8.500h13" /></svg></ViewButton>
            <ViewButton aria-label="页面布局视图"><svg width="13" height="13" fill="#fff" stroke="#5a6b85"><rect x=".5" y=".5" width="12" height="12" fill="#c4ccd8" /><rect x="3.500" y="2.500" width="6" height="8" /><path d="M5 5h3M5 7h3" /></svg></ViewButton>
            <ViewButton aria-label="分页预览"><svg width="13" height="13" fill="#fff" stroke="#5a6b85"><rect x=".5" y=".5" width="12" height="12" fill="#c4ccd8" /><path d="M2.500 1v7h3V1M6.500 1v7h3V1" /></svg></ViewButton>
          </Views>
          <Percent>100%</Percent>
          <IconButton aria-label="缩小"><svg width="16" height="16"><circle cx="8" cy="8" r="7" fill="#e4edf9" stroke="#53719f" /><path d="M4 8h8" stroke="#444" strokeWidth="2" /></svg></IconButton>
          <ZoomRange type="range" aria-label="显示比例" min={0} max={100} defaultValue={50} />
          <IconButton aria-label="放大"><svg width="16" height="16"><circle cx="8" cy="8" r="7" fill="#e4edf9" stroke="#53719f" /><path d="M4 8h8M8 4v8" stroke="#444" strokeWidth="2" /></svg></IconButton>
        </ZoomPanel>
      </StatusBar>

      <Taskbar>
        <Start aria-label="开始菜单"><StartOrb /></Start>
        <TaskList>
          <Task aria-label="贝壳"><Shell /></Task>
          <Task aria-label="文档"><Doc /></Task>
          <Task aria-label="Genesis"><GLogo /></Task>
          <Task aria-label="磁盘"><Floppy /></Task>
          <Task aria-label="钉钉"><Wing /></Task>
          <Task aria-label="P"><PLogo /></Task>
          <Task $on $multi aria-label="Excel"><ExcelIcon /></Task>
          <Task aria-label="记事本"><Notepad /></Task>
          <Task aria-label="CAM"><Cam /></Task>
          <Task $multi aria-label="X"><XLogo /></Task>
          <Task aria-label="CAM 2"><Cam /></Task>
        </TaskList>
        <Tray>
          <IconButton aria-label="键盘"><svg width="16" height="16" fill="none" stroke="#d8dde3"><path d="M3 5c3-4 6 2 10-3" /><rect x=".5" y="7.500" width="15" height="7" fill="#9aa3ae" /><path d="M2 10h12M4 12.500h8" strokeDasharray="1 1" /></svg></IconButton>
          <IconButton aria-label="输入法帮助"><Help s={15} /></IconButton>
          <IconButton aria-label="语言栏"><svg width="9" height="24" fill="none" stroke="#fff"><rect x="3.500" y="1.500" width="5" height="4" /><rect x="1" y="3.500" width="5" height="4" fill="#0c2550" /><path d="M2 18h6l-3 3z" fill="#fff" stroke="none" /></svg></IconButton>
          <IconButton aria-label="显示隐藏的图标"><svg width="8" height="5"><path d="M0 5h8L4 0z" fill="#fff" /></svg></IconButton>
          <IconButton aria-label="操作中心"><svg width="17" height="18"><path d="M2 1v16" stroke="#fff" strokeWidth="1.500" /><path d="M3 2h4l2 1h5v8H9L7 10H3z" fill="#fff" /><circle cx="11" cy="12" r="5" fill="#d8261c" /><path d="M9 10l4 4M13 10l-4 4" stroke="#fff" strokeWidth="1.500" /></svg></IconButton>
          <IconButton aria-label="音量"><svg width="15" height="16" fill="none" stroke="#fff"><path d="M1 5h2l4-4v14l-4-4H1z" fill="#fff" /><path d="M9 5c1 2 1 4 0 6M11 3c2 3 2 7 0 10" /></svg></IconButton>
          <IconButton aria-label="网络"><svg width="16" height="16" fill="none" stroke="#fff"><rect x="4.500" y="4.500" width="10" height="7" strokeWidth="1.500" /><path d="M9.500 12v2M6 14.500h8M2 1v3M5 1v3M1 3.500h5V7l-2 1v6H2" /></svg></IconButton>
          <Clock><span>21:01</span><span>2022/9/28</span></Clock>
          <ShowDesktop aria-label="显示桌面" />
        </Tray>
      </Taskbar>
    </Window>
  );
}
